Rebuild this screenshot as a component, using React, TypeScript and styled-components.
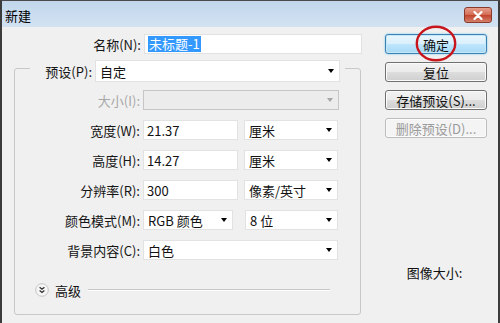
import styled, { createGlobalStyle } from 'styled-components';

const GlobalStyle = createGlobalStyle`
  * { box-sizing: border-box; }
  body {
    margin: 0;
    background: #f0f0f0;
    font-family: "Noto Sans CJK SC", "Noto Sans", sans-serif;
    font-size: 13px;
    color: #111111;
  }
`;

const App = () => {
  return (
    <Window>
      <GlobalStyle />
      <TitleBar>
        <span className="title">新建</span>
        <CloseButton aria-label="关闭">
          <svg width="10" height="9" viewBox="0 0 10 9">
            <path d="M1.5 1 L8.5 8 M8.5 1 L1.5 8" stroke="#ffffff" strokeWidth="2.2" strokeLinecap="round" />
          </svg>
        </CloseButton>
      </TitleBar>
      <Body>
        <FormColumn>
          <NameRow>
            <Label width={130}>名称(N):</Label>
            <TextBox width={218}>
              <Selected>未标题-1</Selected>
            </TextBox>
          </NameRow>
          <Group>
            <Legend>
              <Label width={53}>预设(P):</Label>
              <Select width={245} height={22}>
                自定
                <Arrow />
              </Select>
            </Legend>
            <Rows>
              <Row>
                <Label width={128} disabled>
                  大小(I):
                </Label>
                <Select width={196} disabled>
                  <Arrow disabled />
                </Select>
              </Row>
              <Row>
                <Label width={128}>宽度(W):</Label>
                <TextBox width={95}>21.37</TextBox>
                <Select width={94} gap={6}>
                  厘米
                  <Arrow />
                </Select>
              </Row>
              <Row>
                <Label width={128}>高度(H):</Label>
                <TextBox width={95}>14.27</TextBox>
                <Select width={94} gap={6}>
                  厘米
                  <Arrow />
                </Select>
              </Row>
              <Row>
                <Label width={128}>分辨率(R):</Label>
                <TextBox width={95}>300</TextBox>
                <Select width={94} gap={6}>
                  像素/英寸
                  <Arrow />
                </Select>
              </Row>
              <Row>
                <Label width={128}>颜色模式(M):</Label>
                <Select width={90}>
                  RGB 颜色
                  <Arrow />
                </Select>
                <Select width={93} gap={12}>
                  8 位
                  <Arrow />
                </Select>
              </Row>
              <Row>
                <Label width={128}>背景内容(C):</Label>
                <Select width={195}>
                  白色
                  <Arrow />
                </Select>
              </Row>
            </Rows>
            <Advanced>
              <svg width="14" height="14" viewBox="0 0 14 14">
                <circle cx="7" cy="7" r="6.3" fill="#f6f6f6" stroke="#c4c4c4" />
                <path d="M4.6 4.2 L7 6.2 L9.4 4.2 M4.6 7.4 L7 9.4 L9.4 7.4" fill="none" stroke="#333333" strokeWidth="1.3" />
              </svg>
              <span className="text">高级</span>
              <span className="line" />
            </Advanced>
          </Group>
        </FormColumn>
        <ButtonColumn>
          <Button primary>
            确定
            <Ring width="42" height="37" viewBox="0 0 42 37">
              <ellipse cx="21" cy="18.5" rx="19.2" ry="16.8" fill="none" stroke="#c8161d" strokeWidth="2.4" />
            </Ring>
          </Button>
          <Button>复位</Button>
          <Button>存储预设(S)...</Button>
          <Button disabled>删除预设(D)...</Button>
          <ImageSize>图像大小:</ImageSize>
        </ButtonColumn>
      </Body>
    </Window>
  );
};
export default App;

const Window = styled.div`
  width: 500px;
  height: 323px;
  display: flex;
  flex-direction: column;
  background: #f0f0f0;
  border-top: 1px solid #4a4a4a;
  border-left: 2px solid #3c3c3c;
  border-right: 2px solid #3c3c3c;
  overflow: hidden;
`;

const TitleBar = styled.div`
  height: 26px;
  display: flex;
  align-items: center;
  padding: 0 6px 0 3px;
  background: linear-gradient(#c2d7ec, #d2e2f2);
  > .title {
    font-size: 13px;
    color: #000000;
    margin-top: 2px;
  }
`;

const CloseButton = styled.div`
  margin-left: auto;
  margin-top: 2px;
  width: 28px;
  height: 16px;
  display: flex;
  align-items: center;
  justify-content: center;
  border: 1px solid #8a3a2c;
  border-radius: 3px;
  background: linear-gradient(#e6a08e 0%, #d46a52 50%, #c2432b 51%, #d4806a 100%);
`;

const Body = styled.div`
  flex: 1;
  display: flex;
  padding: 7px 0 0 12px;
`;

const FormColumn = styled.div`
  width: 349px;
  display: flex;
  flex-direction: column;
`;

const NameRow = styled.div`
  display: flex;
  align-items: center;
  height: 20px;
`;

const Label = styled.span<{ width: number; disabled?: boolean }>`
  width: ${(p) => p.width}px;
  flex-shrink: 0;
  text-align: right;
  padding-right: 3px;
  white-space: nowrap;
  color: ${(p) => (p.disabled ? '#a8a8a8' : '#151515')};
`;

const TextBox = styled.div<{ width: number }>`
  width: ${(p) => p.width}px;
  height: 20px;
  display: flex;
  align-items: center;
  padding-left: 3px;
  background: #ffffff;
  border: 1px solid #e2e2e2;
  white-space: nowrap;
`;

const Selected = styled.span`
  background: #3399ff;
  color: #ffffff;
  padding: 0 1px;
  line-height: 16px;
`;

const Group = styled.fieldset`
  width: 347px;
  margin: 0;
  padding: 0 0 17px 0;
  min-width: 0;
  border: 1px solid #c8c8c8;
  border-radius: 3px;
`;

const Legend = styled.legend`
  display: flex;
  align-items: center;
  margin-left: 15px;
  padding: 6px 5px 0 12px;
`;

const Select = styled.div<{ width: number; height?: number; gap?: number; disabled?: boolean }>`
  width: ${(p) => p.width}px;
  height: ${(p) => p.height ?? 20}px;
  margin-left: ${(p) => p.gap ?? 0}px;
  display: flex;
  align-items: center;
  justify-content: space-between;
  padding: 0 5px 0 4px;
  white-space: nowrap;
  background: ${(p) => (p.disabled ? '#ececec' : '#ffffff')};
  border: 1px solid ${(p) => (p.disabled ? '#c6c6c6' : '#e2e2e2')};
`;

const Arrow = styled.span<{ disabled?: boolean }>`
  margin-left: auto;
  width: 0;
  height: 0;
  border-left: 3.5px solid transparent;
  border-right: 3.5px solid transparent;
  border-top: 4px solid ${(p) => (p.disabled ? '#a6a6a6' : '#000000')};
`;

const Rows = styled.div`
  display: flex;
  flex-direction: column;
  gap: 10px;
  padding-top: 8px;
`;

const Row = styled.div`
  display: flex;
  align-items: center;
  height: 20px;
`;

const Advanced = styled.div`
  display: flex;
  align-items: center;
  height: 14px;
  margin-top: 23px;
  padding: 0 30px 0 20px;
  > .text {
    margin-left: 6px;
  }
  > .line {
    flex: 1;
    height: 1px;
    margin-left: 7px;
    margin-top: -2px;
    background: #c8c8c8;
    box-shadow: 0 1px 0 #ffffff;
  }
`;

const ButtonColumn = styled.div`
  width: 102px;
  margin-left: 22px;
  display: flex;
  flex-direction: column;
  gap: 8px;
`;

const Button = styled.div<{ primary?: boolean; disabled?: boolean }>`
  position: relative;
  height: 20px;
  display: flex;
  align-items: center;
  justify-content: center;
  white-space: nowrap;
  border-radius: 3px;
  border: 1px solid ${(p) => (p.primary ? '#3c7fb1' : p.disabled ? '#bcbcbc' : '#707070')};
  color: ${(p) => (p.disabled ? '#9a9a9a' : '#111111')};
  background: ${(p) =>
    p.primary
      ? 'linear-gradient(#eaf6fd 0%, #d9f0fc 50%, #bee6fd 51%, #a7d9f5 100%)'
      : p.disabled
      ? '#f4f4f4'
      : 'linear-gradient(#f2f2f2 0%, #ebebeb 50%, #dddddd 51%, #cfcfcf 100%)'};
  box-shadow: ${(p) => (p.primary ? '0 0 2px #5fc4f0, inset 0 0 0 1px #c4e9fb' : 'inset 0 0 0 1px #fbfbfb')};
`;

const Ring = styled.svg`
  position: absolute;
  left: 29px;
  top: -10px;
  pointer-events: none;
`;

const ImageSize = styled.div`
  margin-top: 117px;
  text-align: center;
  padding-right: 3px;
`;
